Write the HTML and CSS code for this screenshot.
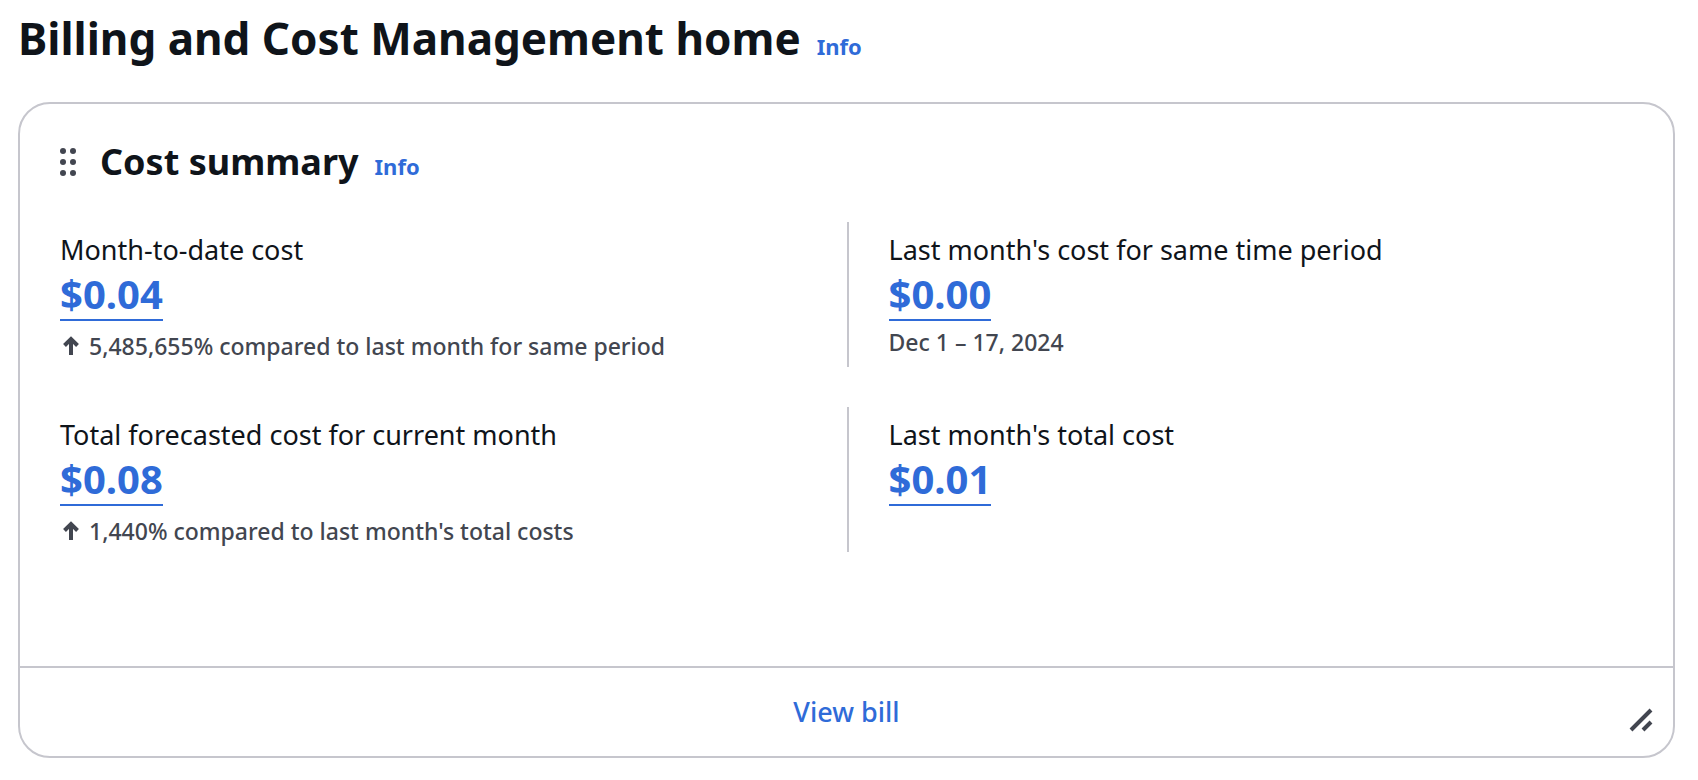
FILE: index.html
```html
<!DOCTYPE html>
<html lang="en">
<head>
<meta charset="utf-8">
<title>Billing and Cost Management home</title>
<link rel="stylesheet" href="styles.css">
</head>
<body>
<main class="page">
  <header class="page-header">
    <h1 class="page-title">Billing and Cost Management home</h1>
    <a class="info" href="#">Info</a>
  </header>
  <section class="card">
    <header class="card-header">
      <button class="drag" type="button" aria-label="Drag handle">
        <svg class="drag-icon" viewBox="0 0 16 28" aria-hidden="true"><circle cx="3" cy="3" r="3"/><circle cx="13" cy="3" r="3"/><circle cx="3" cy="14" r="3"/><circle cx="13" cy="14" r="3"/><circle cx="3" cy="25" r="3"/><circle cx="13" cy="25" r="3"/></svg>
      </button>
      <h2 class="card-title">Cost summary</h2>
      <a class="info" href="#">Info</a>
    </header>
    <div class="metrics">
      <div class="metric">
        <div class="label">Month-to-date cost</div>
        <a class="amount" href="#">$0.04</a>
        <div class="trend">
          <svg class="arrow" viewBox="0 0 18 20" aria-hidden="true"><path d="M9 19V3M2.500 9.500L9 3L15.500 9.500"/></svg>
          <span>5,485,655% compared to last month for same period</span>
        </div>
      </div>
      <div class="metric">
        <div class="label">Last month's cost for same time period</div>
        <a class="amount" href="#">$0.00</a>
        <div class="note">Dec 1 – 17, 2024</div>
      </div>
      <div class="metric">
        <div class="label">Total forecasted cost for current month</div>
        <a class="amount" href="#">$0.08</a>
        <div class="trend">
          <svg class="arrow" viewBox="0 0 18 20" aria-hidden="true"><path d="M9 19V3M2.500 9.500L9 3L15.500 9.500"/></svg>
          <span>1,440% compared to last month's total costs</span>
        </div>
      </div>
      <div class="metric">
        <div class="label">Last month's total cost</div>
        <a class="amount" href="#">$0.01</a>
      </div>
    </div>
    <footer class="card-footer">
      <a class="view-bill" href="#">View bill</a>
      <button class="resize" type="button" aria-label="Resize">
        <svg class="resize-icon" viewBox="0 0 24 24" aria-hidden="true"><path d="M2 22L22 2M14 22L22 14"/></svg>
      </button>
    </footer>
  </section>
</main>
</body>
</html>
```
FILE: styles.css
```css
* { box-sizing: border-box; }
body {
  margin: 0;
  background: #fff;
  color: #0f141a;
  font-family: "Noto Sans", "Open Sans", sans-serif;
}
a { color: #2f6bd8; text-decoration: none; }
button { padding: 0; border: 0; background: none; }
svg { display: block; }
.page { padding: 8px 23px 22px 18px; }
.page-header {
  display: flex;
  align-items: baseline;
  gap: 16px;
  margin-bottom: 34px;
}
.page-title { margin: 0; font-size: 44px; line-height: 60px; }
.info { font-size: 22px; font-weight: 700; line-height: 32px; }
.card { border: 2px solid #c6c6cd; border-radius: 32px; }
.card-header {
  display: flex;
  align-items: baseline;
  gap: 16px;
  padding: 32px 40px 0;
}
.drag { align-self: center; margin-right: 8px; }
.drag-icon { width: 16px; height: 28px; fill: #424650; }
.card-title { margin: 0; font-size: 36px; line-height: 52px; }
.metrics {
  display: grid;
  grid-template-columns: 1fr 1fr;
  row-gap: 40px;
  padding: 34px 40px 114px;
}
.metric { padding: 10px 0 5px; }
.metric:nth-child(even) { border-left: 2px solid #c6c6cd; padding-left: 40px; }
.label { font-size: 27px; line-height: 36px; }
.amount {
  display: inline-block;
  border-bottom: 2px solid #2f6bd8;
  font-size: 40px;
  font-weight: 700;
  line-height: 51px;
  vertical-align: top;
}
.trend, .note { color: #424650; font-size: 23px; font-weight: 500; line-height: 32px; }
.note { padding-top: 5px; }
.trend { display: flex; align-items: center; gap: 9px; padding-top: 9px; }
.arrow {
  width: 18px;
  height: 20px;
  margin-left: 2px;
  fill: none;
  stroke: #424650;
  stroke-width: 4;
}
.card-footer {
  position: relative;
  padding: 24px 40px;
  border-top: 2px solid #c6c6cd;
  text-align: center;
}
.view-bill { display: inline-block; font-size: 27px; font-weight: 500; line-height: 40px; vertical-align: top; }
.resize { position: absolute; right: 20px; bottom: 24px; }
.resize-icon { width: 24px; height: 24px; fill: none; stroke: #424650; stroke-width: 4; }
```
